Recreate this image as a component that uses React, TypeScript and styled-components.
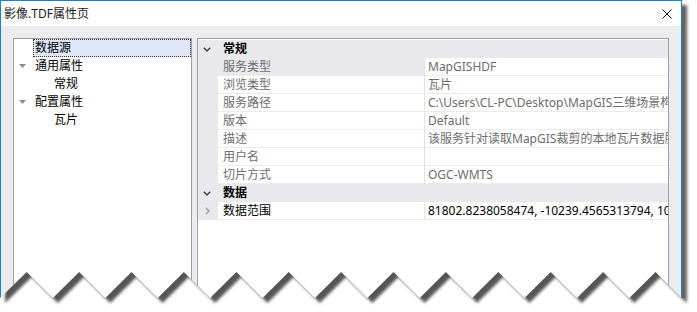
import React from "react";
import styled, { createGlobalStyle } from "styled-components";

const GlobalStyle = createGlobalStyle`
  html, body { margin: 0; padding: 0; background: #ffffff; }
  body {
    font-family: "Noto Sans", "Noto Sans CJK SC", sans-serif;
    font-size: 12px;
    color: #000;
  }
`;

const Page = styled.div`
  position: relative;
  width: 697px;
  height: 312px;
  overflow: hidden;
  background: #ffffff;
`;

const Window = styled.div`
  width: 682px;
  height: 330px;
  box-sizing: border-box;
  border: 1px solid #1a80d6;
  background: #ececf0;
  box-shadow: 5px 5px 3px rgba(0, 0, 0, 0.62);
  display: flex;
  flex-direction: column;
`;

const TitleBar = styled.div`
  height: 25px;
  flex: none;
  background: #ffffff;
  display: flex;
  align-items: center;
  justify-content: space-between;
  padding: 0 9px 0 3px;
`;

const Title = styled.span`
  font-size: 12px;
  color: #1a1a1a;
  line-height: 25px;
`;

const CloseIcon = styled.svg`
  width: 10px;
  height: 10px;
  display: block;
`;

const Body = styled.div`
  flex: 1;
  display: flex;
  gap: 5px;
  padding: 12px 12px 0 12px;
  min-height: 0;
`;

const TreePanel = styled.div`
  width: 179px;
  flex: none;
  box-sizing: border-box;
  border: 1px solid #a0a0a0;
  background: #ffffff;
`;

const TreeRow = styled.div<{ $level: number }>`
  height: 18px;
  display: flex;
  align-items: stretch;
  padding-left: ${(p) => p.$level * 19}px;
`;

const Expander = styled.div`
  width: 19px;
  flex: none;
  display: flex;
  align-items: center;
  justify-content: flex-start;
  padding-left: 5px;
  box-sizing: border-box;
`;

const TreeLabel = styled.div<{ $selected?: boolean }>`
  flex: 1;
  box-sizing: border-box;
  line-height: 16px;
  padding-left: 1px;
  border: 1px ${(p) => (p.$selected ? "dotted #333" : "solid transparent")};
  background: ${(p) => (p.$selected ? "#dde7f8" : "transparent")};
  color: #000;
`;

const GridPanel = styled.div`
  flex: 1;
  box-sizing: border-box;
  border: 1px solid #a0a0a0;
  background: #ffffff;
  padding-top: 1px;
  overflow: hidden;
`;

const CategoryRow = styled.div`
  height: 18px;
  display: grid;
  grid-template-columns: 20px 1fr;
  background: #e9e9ed;
`;

const Gutter = styled.div`
  display: flex;
  align-items: center;
  justify-content: center;
  padding-right: 2px;
  background: #e9e9ed;
`;

const CategoryLabel = styled.div`
  font-weight: 700;
  line-height: 18px;
  padding-left: 5px;
  color: #000;
`;

const PropRow = styled.div`
  height: 18px;
  display: grid;
  grid-template-columns: 20px 207px 1fr;
`;

const NameCell = styled.div<{ $selected?: boolean; $active?: boolean }>`
  box-sizing: border-box;
  border-bottom: 1px solid #ebebeb;
  border-right: 1px solid #e2e2e2;
  background: ${(p) => (p.$selected ? "#e9e9ed" : "#ffffff")};
  color: ${(p) => (p.$active ? "#000" : "#6d6d6d")};
  padding-left: 5px;
  line-height: 17px;
  white-space: nowrap;
  overflow: hidden;
`;

const ValueCell = styled.div<{ $active?: boolean }>`
  box-sizing: border-box;
  border-bottom: 1px solid #ebebeb;
  background: #ffffff;
  color: ${(p) => (p.$active ? "#000" : "#6d6d6d")};
  padding-left: 3px;
  line-height: 17px;
  white-space: nowrap;
  overflow: hidden;
`;

const TearOverlay = styled.svg`
  position: absolute;
  left: 0;
  top: 250px;
  width: 697px;
  height: 62px;
  display: block;
`;

const DownTriangle = () => (
  <svg width="7" height="4" viewBox="0 0 7 4">
    <polygon points="0,0 7,0 3.5,4" fill="#8c8c8c" />
  </svg>
);

const ChevronDown = () => (
  <svg width="8" height="5" viewBox="0 0 8 5">
    <path d="M0.8 0.8 L4 4 L7.2 0.8" fill="none" stroke="#3c3c3c" strokeWidth="1.4" />
  </svg>
);

const ChevronRight = () => (
  <svg width="5" height="8" viewBox="0 0 5 8">
    <path d="M0.8 0.8 L4 4 L0.8 7.2" fill="none" stroke="#a0a0a0" strokeWidth="1.4" />
  </svg>
);

type Prop = { name: string; value: string; selected?: boolean; active?: boolean };

const general: Prop[] = [
  { name: "服务类型", value: "MapGISHDF", selected: true },
  { name: "浏览类型", value: "瓦片" },
  { name: "服务路径", value: "C:\\Users\\CL-PC\\Desktop\\MapGIS三维场景构建\\数据\\影像.TDF" },
  { name: "版本", value: "Default" },
  { name: "描述", value: "该服务针对读取MapGIS裁剪的本地瓦片数据服务" },
  { name: "用户名", value: "" },
  { name: "切片方式", value: "OGC-WMTS" },
];

function tearPoints() {
  const period = 52.4;
  const first = 26.7;
  const peakY = 272 - 250;
  const valleyY = 298 - 250;
  const pts: [number, number][] = [[0, valleyY]];
  for (let k = 0; k <= 12; k++) {
    const px = first + period * k;
    pts.push([px, peakY]);
    pts.push([px + period / 2, valleyY]);
  }
  return pts;
}

export default function App() {
  const zig = tearPoints();
  const last = zig[zig.length - 1];
  const zigStr = zig.map((p) => `${p[0].toFixed(1)},${p[1]}`).join(" ");
  const whiteRegion = `${zigStr} 697,${last[1]} 697,70 0,70`;
  const reversed = [...zig].reverse().map((p) => `${p[0].toFixed(1)},${p[1]}`).join(" ");
  const contentRegion = `0,-20 ${last[0].toFixed(1)},-20 ${reversed}`;

  return (
    <Page>
      <GlobalStyle />
      <Window>
        <TitleBar>
          <Title>影像.TDF属性页</Title>
          <CloseIcon viewBox="0 0 10 10">
            <path d="M0.5 0.5 L9.5 9.5 M9.5 0.5 L0.5 9.5" stroke="#111" strokeWidth="1" />
          </CloseIcon>
        </TitleBar>
        <Body>
          <TreePanel>
            <TreeRow $level={0}>
              <Expander />
              <TreeLabel $selected>数据源</TreeLabel>
            </TreeRow>
            <TreeRow $level={0}>
              <Expander>
                <DownTriangle />
              </Expander>
              <TreeLabel>通用属性</TreeLabel>
            </TreeRow>
            <TreeRow $level={1}>
              <Expander />
              <TreeLabel>常规</TreeLabel>
            </TreeRow>
            <TreeRow $level={0}>
              <Expander>
                <DownTriangle />
              </Expander>
              <TreeLabel>配置属性</TreeLabel>
            </TreeRow>
            <TreeRow $level={1}>
              <Expander />
              <TreeLabel>瓦片</TreeLabel>
            </TreeRow>
          </TreePanel>
          <GridPanel>
            <CategoryRow>
              <Gutter>
                <ChevronDown />
              </Gutter>
              <CategoryLabel>常规</CategoryLabel>
            </CategoryRow>
            {general.map((p) => (
              <PropRow key={p.name}>
                <Gutter />
                <NameCell $selected={p.selected}>{p.name}</NameCell>
                <ValueCell>{p.value}</ValueCell>
              </PropRow>
            ))}
            <CategoryRow>
              <Gutter>
                <ChevronDown />
              </Gutter>
              <CategoryLabel>数据</CategoryLabel>
            </CategoryRow>
            <PropRow>
              <Gutter>
                <ChevronRight />
              </Gutter>
              <NameCell $active>数据范围</NameCell>
              <ValueCell $active>81802.8238058474, -10239.4565313794, 100912.3381412766, 8903.2018926442</ValueCell>
            </PropRow>
          </GridPanel>
        </Body>
      </Window>
      <TearOverlay viewBox="0 0 697 62">
        <defs>
          <clipPath id="below">
            <polygon points={whiteRegion} />
          </clipPath>
          <filter id="blur" x="-10%" y="-50%" width="120%" height="200%">
            <feGaussianBlur stdDeviation="1.6" />
          </filter>
        </defs>
        <polygon points={whiteRegion} fill="#ffffff" />
        <g clipPath="url(#below)">
          <polygon points={contentRegion} fill="#555555" filter="url(#blur)" transform="translate(5,5)" />
        </g>
      </TearOverlay>
    </Page>
  );
}
